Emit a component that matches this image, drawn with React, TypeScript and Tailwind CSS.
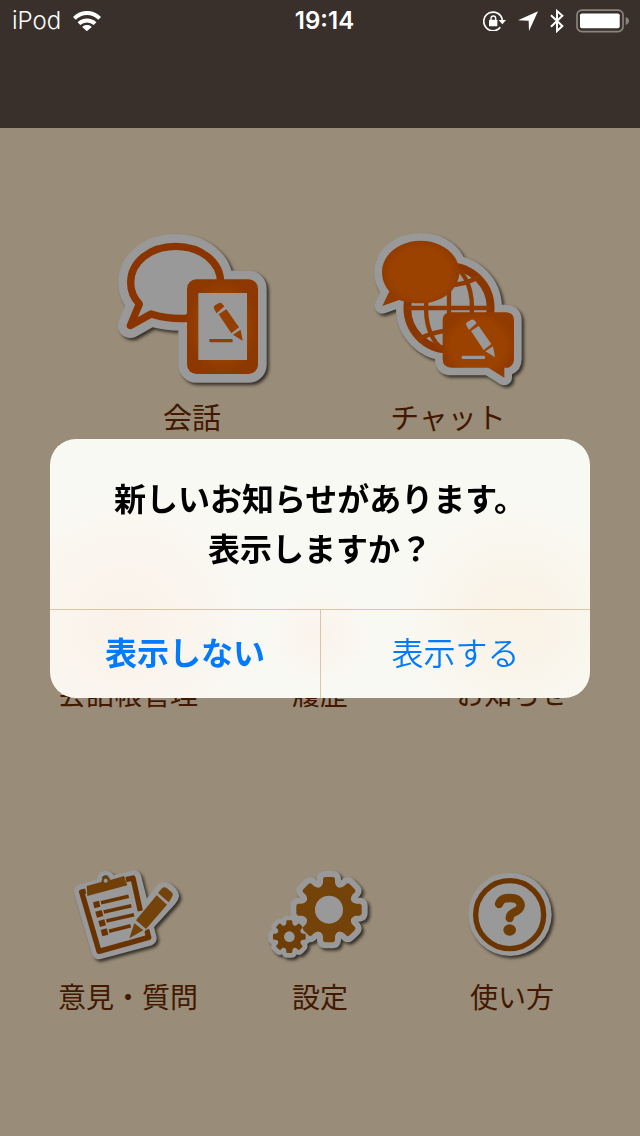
import type { ReactNode } from 'react';

const TEETH = [0, 45, 90, 135, 180, 225, 270, 315];

function Wifi() {
  return (
    <svg viewBox="0 0 85 60" className="h-5 w-7" fill="none" stroke="#fff" strokeWidth="12">
      <path d="M4 22C26 0 59 0 81 22" />
      <path d="M18 38C32 25 53 25 67 38" />
      <path d="M28 48C36 40 49 40 57 48L42 61Z" fill="#fff" stroke="none" />
    </svg>
  );
}

function RotationLock() {
  return (
    <svg viewBox="0 0 69 60" className="h-5 w-[23px]">
      <path d="M52 49A28 28 0 1 1 58 27" fill="none" stroke="#fff" strokeWidth="5" />
      <path d="M47 27h22L58 40Z" fill="#fff" />
      <rect x="18" y="26" width="25" height="20" rx="2" fill="#fff" />
      <path d="M24 28v-6a7 7 0 0 1 14 0v6" fill="none" stroke="#fff" strokeWidth="4" />
    </svg>
  );
}

function LocationArrow() {
  return (
    <svg viewBox="0 0 60 60" className="size-5">
      <path d="M60 1L33 60L32 29L0 28Z" fill="#fff" />
    </svg>
  );
}

function Bluetooth() {
  return (
    <svg viewBox="0 0 42 72" className="h-6 w-3.5" fill="none" stroke="#fff" strokeWidth="6">
      <path d="M3 19L37 51L21 66V6L37 20L3 53" />
    </svg>
  );
}

function Battery() {
  return (
    <svg viewBox="0 0 160 70" className="h-6 w-[53px]">
      <rect x="3" y="2" width="139" height="65" rx="15" fill="none" stroke="#8b857e" strokeWidth="5" />
      <rect x="12" y="12" width="120" height="45" rx="6" fill="#fff" />
      <path d="M150 23q10 4 10 12t-10 12z" fill="#8b857e" />
    </svg>
  );
}

function Pencil() {
  return (
    <>
      <path d="M327 266Q324 260 330 256L342 249Q348 247 351 251L358 259L335 280Z" />
      <path d="M341 283L364 268L402 322L379 340Z" />
      <path d="M384 344L407 329L413 362Z" />
      <rect x="313" y="357" width="70" height="10" rx="3" />
    </>
  );
}

function TalkIcon() {
  const bubble = 'M347 188C347 125 287 79 212 79S77 125 77 188C77 215 87 235 103 252L76 317L138 282C170 292 210 297 247 295Z';
  return (
    <svg viewBox="-9 0 540 540" className="size-[180px]">
      <defs>
        <radialGradient id="talk">
          <stop offset="60%" stopColor="#9a4200" />
          <stop offset="100%" stopColor="#8c3800" />
        </radialGradient>
      </defs>
      <g fill="#999" stroke="#999" strokeLinejoin="round" className="drop-shadow-[7px_7px_5px_rgba(0,0,0,0.65)]">
        <path d={bubble} strokeWidth="74" />
        <rect x="246" y="178" width="213" height="284" rx="28" strokeWidth="52" />
      </g>
      <path d={bubble} fill="#999" stroke="#8a3500" strokeWidth="22" strokeLinejoin="round" />
      <rect x="246" y="178" width="213" height="284" rx="28" fill="url(#talk)" />
      <rect x="280" y="219" width="146" height="201" fill="#999" />
      <g fill="#943e00">
        <Pencil />
      </g>
    </svg>
  );
}

function ChatIcon() {
  const speech = 'M182 62C246 62 298 104 298 156S246 250 182 250C158 250 136 247 117 240L67 258L88 214C74 198 66 178 66 156C66 104 118 62 182 62Z';
  const note = 'M274 277H436Q462 277 462 301V417Q462 436 445 443H433V473L385 443H274Q248 443 248 417V301Q248 277 274 277Z';
  return (
    <svg viewBox="-6 0 540 540" className="size-[180px]">
      <defs>
        <radialGradient id="chat">
          <stop offset="75%" stopColor="#9b4200" />
          <stop offset="100%" stopColor="#913b00" />
        </radialGradient>
      </defs>
      <g fill="#999" stroke="#999" strokeWidth="46" strokeLinejoin="round" className="drop-shadow-[7px_7px_5px_rgba(0,0,0,0.65)]">
        <path d={speech} />
        <circle cx="267" cy="264" r="136" />
        <path d={note} />
      </g>
      <g fill="none" stroke="#8f3b00" strokeWidth="13">
        <circle cx="267" cy="264" r="125" strokeWidth="23" stroke="#8a3600" />
        <ellipse cx="267" cy="264" rx="69" ry="126" />
        <path d="M267 138V390M141 264H393" />
        <path d="M172 168Q267 222 362 168M172 360Q267 306 362 360" />
      </g>
      <path d={speech} fill="url(#chat)" />
      <path d={note} fill="url(#chat)" />
      <g fill="#999" transform="translate(-8 50)">
        <Pencil />
      </g>
    </svg>
  );
}

function FeedbackIcon() {
  const sheet = 'M64 109L222 68L268 250L117 291Z';
  const pencil = 'M208 250L222 205L300 106Q313 90 326 103L336 112Q346 124 333 137L250 228Z';
  return (
    <svg viewBox="-6 0 420 360" className="h-[120px] w-[140px]">
      <g fill="#999" stroke="#999" strokeWidth="40" strokeLinejoin="round" className="drop-shadow-[7px_7px_5px_rgba(0,0,0,0.65)]">
        <path d={sheet} strokeWidth="44" />
        <circle cx="137" cy="74" r="7" />
        <path d={pencil} strokeWidth="32" />
      </g>
      <g fill="none" stroke="#683300" strokeWidth="16" strokeLinejoin="round">
        <path d="M77 108L65 111L117 289L266 247L260 224" />
        <path d="M198 74L219 69L241 168" />
      </g>
      <path d="M80 93L124 81Q126 65 138 65T151 75L192 63L202 91L82 123Z" fill="#704008" />
      <circle cx="137" cy="77" r="6" fill="#999" />
      <g fill="#683300">
        <path d="M99 142L117 137L121 155L103 160Z" />
        <path d="M106 170L125 165L130 183L111 188Z" />
        <path d="M115 198L133 193L138 211L120 216Z" />
        <path d="M122 225L140 220L145 239L127 244Z" />
      </g>
      <path d="M123 143L206 124M131 171L214 152M139 198L222 179M147 229L212 212" stroke="#683300" strokeWidth="11" />
      <path d={pencil} fill="#999" stroke="#999" strokeWidth="8" />
      <g fill="#73430a">
        <path d="M208 250L223 205L250 226Z" />
        <path d="M228 196L290 121L321 149L258 222Z" />
        <path d="M294 114L306 100Q313 93 321 100L335 112Q341 118 336 126L326 142Z" />
      </g>
    </svg>
  );
}

interface GearProps {
  x: number;
  y: number;
  scale: number;
}

function Gear({ x, y, scale }: GearProps) {
  return (
    <g transform={`translate(${x} ${y}) scale(${scale})`}>
      <circle r="72" />
      {TEETH.map((angle) => (
        <path key={angle} d="M-32 -62Q-18 -72 -18 -82V-92Q-17 -98 -11 -98H11Q17 -98 18 -92V-82Q18 -72 32 -62Z" transform={`rotate(${angle})`} />
      ))}
    </g>
  );
}

function SettingsIcon() {
  return (
    <svg viewBox="-15 0 420 360" className="h-[120px] w-[140px]">
      <g fill="#999" stroke="#999" strokeLinejoin="round" className="drop-shadow-[7px_7px_5px_rgba(0,0,0,0.65)]">
        <g strokeWidth="36">
          <Gear x={222} y={164} scale={1} />
        </g>
        <g strokeWidth="58">
          <Gear x={103} y={245} scale={0.5} />
        </g>
      </g>
      <g fill="#73430a">
        <Gear x={222} y={164} scale={1} />
      </g>
      <circle cx="103" cy="245" r="46" fill="#999" />
      <g fill="#6f3d06">
        <Gear x={103} y={245} scale={0.5} />
      </g>
      <circle cx="222" cy="164" r="42" fill="#999" />
      <circle cx="103" cy="245" r="16" fill="#999" />
    </svg>
  );
}

function HelpIcon() {
  return (
    <svg viewBox="-39 0 420 360" className="h-[120px] w-[140px]">
      <circle cx="165" cy="178" r="125" fill="#999" className="drop-shadow-[7px_7px_5px_rgba(0,0,0,0.65)]" />
      <circle cx="164" cy="179" r="102" fill="none" stroke="#6b3500" strokeWidth="16" />
      <path d="M132 147C138 130 151 129 165 129C201 129 205 158 185 168C169 176 164 179 164 189" fill="none" stroke="#703d05" strokeWidth="25" strokeLinecap="round" />
      <ellipse cx="164" cy="225" rx="19" ry="17" fill="#703d05" />
    </svg>
  );
}

interface MenuItemProps {
  label: string;
  children?: ReactNode;
}

function MenuItem({ label, children }: MenuItemProps) {
  return (
    <button type="button" className="flex flex-col items-center gap-1 text-[28px] leading-[38px]">
      <span className="block h-[120px]">{children}</span>
      {label}
    </button>
  );
}

export default function App() {
  return (
    <div className="min-h-screen bg-[#998c78] font-['Inter','Noto_Sans_CJK_JP',sans-serif] text-[#421900]">
      {/* Header */}
      <header className="h-32 bg-[#39302b] text-white">
        <div className="grid h-[41px] grid-cols-[1fr_auto_1fr] items-center pr-[11px] pl-3 text-2xl">
          <div className="flex items-center gap-3">
            <span className="font-light">iPod</span>
            <Wifi />
          </div>
          <span className="pl-2 font-semibold">19:14</span>
          <div className="flex items-center justify-end gap-3">
            <RotationLock />
            <LocationArrow />
            <Bluetooth />
            <Battery />
          </div>
        </div>
      </header>

      {/* Menu */}
      <main className="pt-[92px] pb-[120px]">
        <div className="grid grid-cols-2 px-16">
          <button type="button" className="flex flex-col items-center text-[29px] leading-[38px]">
            <TalkIcon />
            会話
          </button>
          <button type="button" className="flex flex-col items-center text-[29px] leading-[38px]">
            <ChatIcon />
            チャット
          </button>
        </div>
        <div className="mt-[114px] grid grid-cols-3 gap-y-[141px] px-8">
          <MenuItem label="会話帳管理" />
          <MenuItem label="履歴" />
          <MenuItem label="お知らせ" />
          <MenuItem label="意見・質問">
            <FeedbackIcon />
          </MenuItem>
          <MenuItem label="設定">
            <SettingsIcon />
          </MenuItem>
          <MenuItem label="使い方">
            <HelpIcon />
          </MenuItem>
        </div>
      </main>

      {/* Notice dialog */}
      <div className="fixed inset-0 flex items-center justify-center px-[50px]">
        <div
          role="alertdialog"
          aria-labelledby="notice-title"
          className="w-full max-w-[540px] overflow-hidden rounded-[26px] bg-[#f9f9f3] bg-[radial-gradient(circle_at_14%_72%,#fbf2e9,transparent_28%),radial-gradient(circle_at_50%_76%,#fbf3ec,transparent_16%),radial-gradient(circle_at_86%_70%,#faf2e5,transparent_24%)]"
        >
          <h1 id="notice-title" className="pt-9 pb-[34px] text-center text-[32px] leading-[50px] font-semibold text-black">
            新しいお知らせがあります。
            <br />
            表示しますか？
          </h1>
          <div className="grid grid-cols-2 border-t border-[#dcc5a5] text-[32px] text-[#007aff]">
            <button type="button" className="h-[88px] font-semibold">
              表示しない
            </button>
            <button type="button" className="h-[88px] border-l border-[#dcc5a5] font-[350]">
              表示する
            </button>
          </div>
        </div>
      </div>
    </div>
  );
}
